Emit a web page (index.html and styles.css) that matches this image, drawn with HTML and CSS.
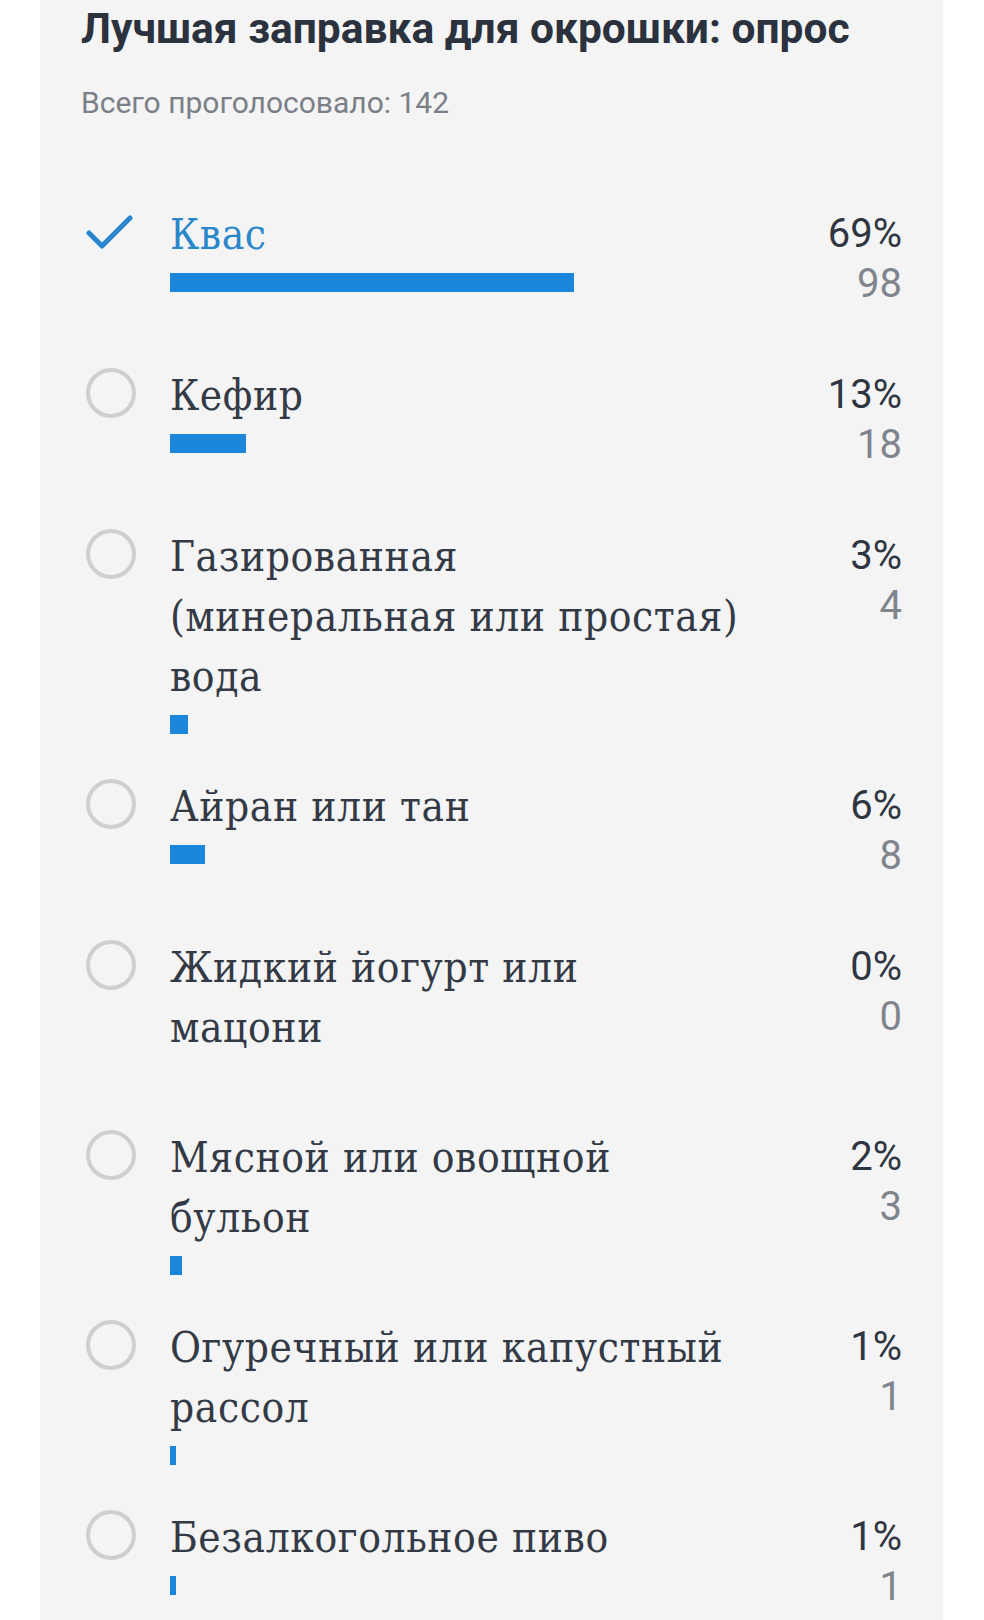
FILE: index.html
```html
<!DOCTYPE html>
<html lang="ru">
<head>
    <meta charset="UTF-8">
    <meta name="viewport" content="width=device-width, initial-scale=1.0">
    <title>Лучшая заправка для окрошки: опрос</title>
    <link rel="stylesheet" href="styles.css">
</head>
<body>

<div class="poll">
    <h1 class="poll-title">Лучшая заправка для окрошки: опрос</h1>
    <p class="poll-total">Всего проголосовало: 142</p>

    <ul class="poll-options">
        <li class="option option-voted">
            <span class="option-mark">
                <svg class="check" viewBox="0 0 50 50"><path d="M3 26 L16 39 L44 11"/></svg>
            </span>
            <div class="option-body">
                <div class="option-label">Квас</div>
                <div class="bar-track"><div class="bar" style="width: 69%"></div></div>
            </div>
            <div class="option-stats">
                <div class="option-percent">69%</div>
                <div class="option-count">98</div>
            </div>
        </li>
        <li class="option">
            <span class="option-mark"><span class="radio"></span></span>
            <div class="option-body">
                <div class="option-label">Кефир</div>
                <div class="bar-track"><div class="bar" style="width: 13%"></div></div>
            </div>
            <div class="option-stats">
                <div class="option-percent">13%</div>
                <div class="option-count">18</div>
            </div>
        </li>
        <li class="option">
            <span class="option-mark"><span class="radio"></span></span>
            <div class="option-body">
                <div class="option-label">Газированная<br>(минеральная или простая)<br>вода</div>
                <div class="bar-track"><div class="bar" style="width: 3%"></div></div>
            </div>
            <div class="option-stats">
                <div class="option-percent">3%</div>
                <div class="option-count">4</div>
            </div>
        </li>
        <li class="option">
            <span class="option-mark"><span class="radio"></span></span>
            <div class="option-body">
                <div class="option-label">Айран или тан</div>
                <div class="bar-track"><div class="bar" style="width: 6%"></div></div>
            </div>
            <div class="option-stats">
                <div class="option-percent">6%</div>
                <div class="option-count">8</div>
            </div>
        </li>
        <li class="option">
            <span class="option-mark"><span class="radio"></span></span>
            <div class="option-body">
                <div class="option-label">Жидкий йогурт или<br>мацони</div>
                <div class="bar-track"><div class="bar" style="width: 0%"></div></div>
            </div>
            <div class="option-stats">
                <div class="option-percent">0%</div>
                <div class="option-count">0</div>
            </div>
        </li>
        <li class="option">
            <span class="option-mark"><span class="radio"></span></span>
            <div class="option-body">
                <div class="option-label">Мясной или овощной<br>бульон</div>
                <div class="bar-track"><div class="bar" style="width: 2%"></div></div>
            </div>
            <div class="option-stats">
                <div class="option-percent">2%</div>
                <div class="option-count">3</div>
            </div>
        </li>
        <li class="option">
            <span class="option-mark"><span class="radio"></span></span>
            <div class="option-body">
                <div class="option-label">Огуречный или капустный<br>рассол</div>
                <div class="bar-track"><div class="bar" style="width: 1%"></div></div>
            </div>
            <div class="option-stats">
                <div class="option-percent">1%</div>
                <div class="option-count">1</div>
            </div>
        </li>
        <li class="option">
            <span class="option-mark"><span class="radio"></span></span>
            <div class="option-body">
                <div class="option-label">Безалкогольное пиво</div>
                <div class="bar-track"><div class="bar" style="width: 1%"></div></div>
            </div>
            <div class="option-stats">
                <div class="option-percent">1%</div>
                <div class="option-count">1</div>
            </div>
        </li>
    </ul>
</div>

</body>
</html>
```

FILE: styles.css
```css
body {
    margin: 0;
    background-color: #fff;
    font-family: Roboto, "Liberation Sans", sans-serif;
    color: #2f3541;
}
.poll {
    margin: 0 41px 0 40px;
    padding: 4px 41px 0;
    background-color: #f4f4f4;
}
.poll-title {
    margin: 0;
    font-size: 42.5px;
    line-height: 50px;
    font-weight: 700;
    color: #2b323d;
}
.poll-total {
    margin: 28px 0 0;
    font-size: 30px;
    line-height: 42px;
    color: #7b8088;
}
.poll-options {
    list-style-type: none;
    margin: 81px 0 0;
    padding: 0;
}
.option {
    display: flex;
    align-items: flex-start;
    margin-bottom: 43px;
}
.option-mark {
    flex-shrink: 0;
    width: 89px;
    padding: 2px 0 0 5px;
    box-sizing: border-box;
}
.radio {
    display: block;
    width: 50px;
    height: 50px;
    border: 4px solid #cfcfcf;
    border-radius: 50%;
    box-sizing: border-box;
}
.check {
    display: block;
    width: 50px;
    height: 50px;
}
.check path {
    fill: none;
    stroke: #2786cf;
    stroke-width: 5;
    stroke-linecap: round;
    stroke-linejoin: round;
}
.option-body {
    flex: 1;
}
.option-label {
    font-family: "DejaVu Serif", "Liberation Serif", serif;
    font-stretch: condensed;
    font-size: 42px;
    line-height: 60px;
    letter-spacing: 0.6px;
    color: #333a45;
}
.option-voted .option-label {
    color: #2a87ca;
}
.bar-track {
    width: 585px;
    height: 19px;
    margin-top: 8px;
}
.bar {
    height: 100%;
    background-color: #1a86dc;
}
.option-stats {
    text-align: right;
    padding: 4px 0 14px;
}
.option-percent,
.option-count {
    font-size: 40px;
    line-height: 50px;
}
.option-percent {
    color: #2f3541;
}
.option-count {
    color: #80858d;
}
```
